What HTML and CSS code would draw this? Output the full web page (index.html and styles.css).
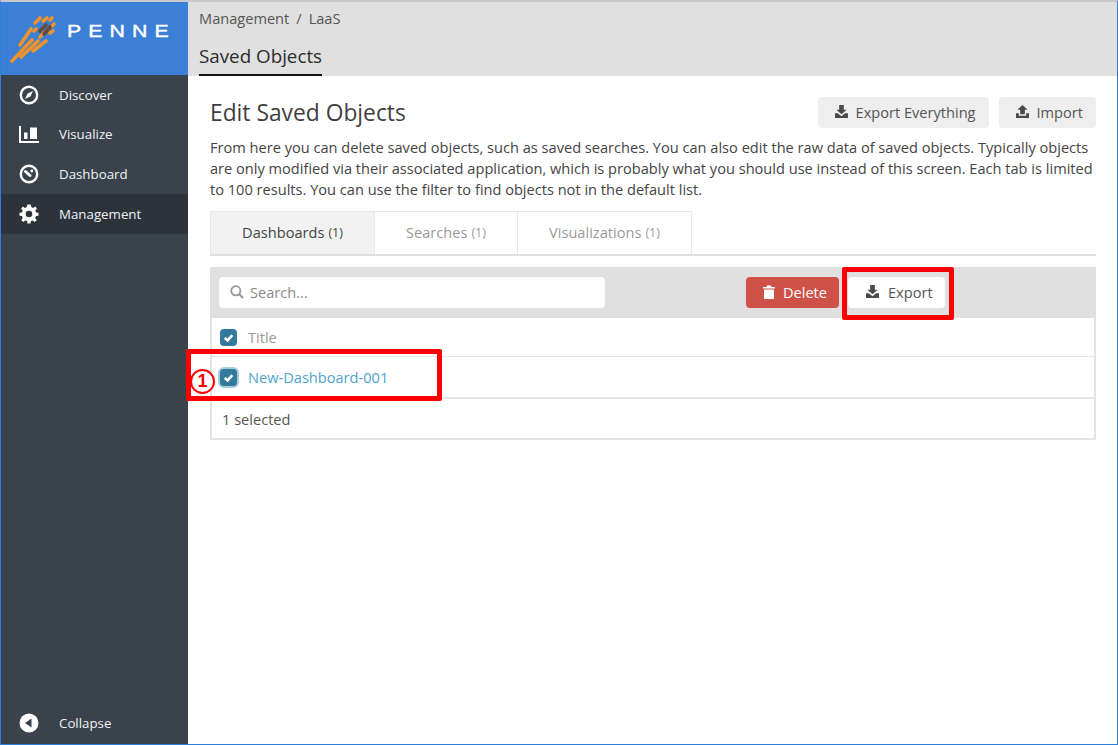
FILE: index.html
```html
<!DOCTYPE html>
<html lang="en">
<head>
<meta charset="utf-8">
<title>Saved Objects</title>
<link rel="stylesheet" href="styles.css">
</head>
<body>
<div class="frame">
  <aside class="sidebar">
    <div class="logo">
      <svg class="logo-mark" width="52" height="52" viewBox="10 13 52 52">
        <g stroke="#f0932b" stroke-width="3.600" stroke-linecap="round">
          <path d="M12 61 L32 40"/><path d="M21 57 L38 41"/><path d="M33 51 L46 41"/>
          <path d="M20 45 L31 29"/><path d="M35 23 L40 18"/><path d="M43 21 L47 18"/>
          <path d="M50 20 L52 18"/><path d="M34 31 L36 29"/><path d="M52 26 L54 24"/>
          <path d="M50 33 L53 31"/><path d="M40 37 L44 33"/>
        </g>
        <g stroke="#6b4a35" stroke-width="3.600" stroke-linecap="round">
          <path d="M40 31 L46 25"/><path d="M44 34 L50 27"/>
        </g>
      </svg>
      <span class="logo-text">PENNE</span>
    </div>
    <nav class="nav">
      <a class="nav-item">
        <svg class="nav-icon" viewBox="0 0 20 20"><circle cx="10" cy="10" r="8.200" fill="none" stroke="#fff" stroke-width="2.400"/><path d="M14 6 L11.400 11.400 L6 14 L8.600 8.600 Z" fill="#fff"/></svg>
        <span>Discover</span>
      </a>
      <a class="nav-item">
        <svg class="nav-icon" viewBox="0 0 20 20"><path d="M1 2 V18 H20" fill="none" stroke="#fff" stroke-width="2"/><rect x="5" y="8.500" width="3.500" height="6.500" fill="#fff"/><rect x="11" y="3.500" width="7" height="11.500" fill="#fff"/></svg>
        <span>Visualize</span>
      </a>
      <a class="nav-item">
        <svg class="nav-icon" viewBox="0 0 20 20"><circle cx="10" cy="10" r="8.200" fill="none" stroke="#fff" stroke-width="2.400"/><path d="M6.500 7.500 L11 11.500" stroke="#fff" stroke-width="3" stroke-linecap="round"/><circle cx="12.800" cy="7" r="1.400" fill="#fff"/></svg>
        <span>Dashboard</span>
      </a>
      <a class="nav-item active">
        <svg class="nav-icon" viewBox="0 0 20 20"><path fill="#fff" fill-rule="evenodd" d="M8.300 0.500 H11.700 L12.200 3 L14.200 3.900 L16.400 2.500 L18 4.800 L16.300 6.500 L17 8.400 L19.500 8.800 V11.700 L17 12.100 L16.200 14 L17.700 16.200 L15.500 18 L13.800 16.400 L11.900 17.100 L11.500 19.500 H8.500 L8.100 17.100 L6.200 16.400 L4.400 18 L2.300 16.200 L3.700 14 L3 12.100 L0.500 11.700 V8.800 L3 8.400 L3.700 6.500 L2.100 4.800 L3.800 2.500 L5.800 3.900 L7.800 3 Z M10 6.700 A3.300 3.300 0 1 0 10 13.300 A3.300 3.300 0 1 0 10 6.700 Z"/></svg>
        <span>Management</span>
      </a>
    </nav>
    <a class="nav-item collapse">
      <svg class="nav-icon" viewBox="0 0 20 20"><circle cx="10" cy="10" r="9.500" fill="#fff"/><path d="M12.500 5.500 V14.500 L6 10 Z" fill="#3a424c"/></svg>
      <span>Collapse</span>
    </a>
  </aside>
  <main class="main">
    <header class="topbar">
      <div class="crumbs"><span>Management</span><span class="sep">/</span><span>LaaS</span></div>
      <div class="topbar-tab">Saved Objects</div>
    </header>
    <section class="content">
      <div class="title-row">
        <h1>Edit Saved Objects</h1>
        <div class="title-actions">
          <button class="btn btn-grey">
            <svg class="btn-icon" viewBox="0 0 16 14"><path d="M5.500 0 H10.500 V5 H13.500 L8 10 L2.500 5 H5.500 Z" fill="#4a4a4a"/><path d="M1 9 H4 L8 12 L12 9 H15 V14 H1 Z" fill="#4a4a4a"/></svg>
            Export Everything
          </button>
          <button class="btn btn-grey">
            <svg class="btn-icon" viewBox="0 0 16 14"><path d="M8 0 L13.500 5 H10.500 V10 H5.500 V5 H2.500 Z" fill="#4a4a4a"/><path d="M1 9 H4 V11.500 H12 V9 H15 V14 H1 Z" fill="#4a4a4a"/></svg>
            Import
          </button>
        </div>
      </div>
      <p class="intro">From here you can delete saved objects, such as saved searches. You can also edit the raw data of saved objects. Typically objects are only modified via their associated application, which is probably what you should use instead of this screen. Each tab is limited to 100 results. You can use the filter to find objects not in the default list.</p>
      <div class="tabs">
        <div class="tab active">Dashboards <small>(1)</small></div>
        <div class="tab">Searches <small>(1)</small></div>
        <div class="tab">Visualizations <small>(1)</small></div>
      </div>
      <div class="toolbar">
        <div class="search">
          <svg class="search-icon" viewBox="0 0 14 14"><circle cx="5.800" cy="5.800" r="4.600" fill="none" stroke="#9a9a9a" stroke-width="1.800"/><path d="M9.200 9.200 L13 13" stroke="#9a9a9a" stroke-width="2.200"/></svg>
          <span>Search...</span>
        </div>
        <div class="toolbar-actions">
          <button class="btn btn-danger">
            <svg class="trash" viewBox="0 0 12 14"><path d="M4 0.500 H8 L8.500 2 H12 V3.500 H0 V2 H3.500 Z M1 4.500 H11 V14 H1 Z" fill="#fff"/></svg>
            Delete
          </button>
          <button class="btn btn-white">
            <svg class="btn-icon" viewBox="0 0 16 14"><path d="M5.500 0 H10.500 V5 H13.500 L8 10 L2.500 5 H5.500 Z" fill="#4a4a4a"/><path d="M1 9 H4 L8 12 L12 9 H15 V14 H1 Z" fill="#4a4a4a"/></svg>
            Export
          </button>
        </div>
      </div>
      <div class="table">
        <div class="row row-head"><span class="check"><svg viewBox="0 0 18 18"><path d="M5 9.500 L8 12 L13 6.500" fill="none" stroke="#fff" stroke-width="2.800"/></svg></span><span class="th">Title</span></div>
        <div class="row row-body"><span class="check focus"><svg viewBox="0 0 18 18"><path d="M5 9.500 L8 12 L13 6.500" fill="none" stroke="#fff" stroke-width="2.800"/></svg></span><a class="link">New-Dashboard-001</a></div>
        <div class="row row-foot">1 selected</div>
      </div>
    </section>
  </main>
  <div class="mark mark-export"></div>
  <div class="mark mark-row"></div>
  <div class="step">1</div>
</div>
</body>
</html>
```

FILE: styles.css
```css
* { box-sizing: border-box; }
html, body { margin: 0; height: 100%; }
body { font-family: "Open Sans", sans-serif; color: #444; background: #fff; overflow: hidden; }
.frame {
  position: relative;
  width: 1118px;
  height: 745px;
  display: flex;
  border-top: 2px solid #c8c8cc;
  border-left: 1px solid #2f80d8;
  border-right: 1px solid #2f80d8;
  border-bottom: 1px solid #2f80d8;
}
.sidebar {
  width: 187px;
  flex: none;
  background: #3a424c;
  display: flex;
  flex-direction: column;
  color: #eef2f5;
}
.logo {
  height: 73px;
  background: #3b80d6;
  display: flex;
  align-items: flex-start;
  padding: 11px 0 0 9px;
  gap: 5px;
  flex: none;
}
.logo-mark { flex: none; }
.logo-text {
  color: #fff;
  font-family: "Liberation Sans", sans-serif;
  font-size: 17px;
  line-height: 20px;
  letter-spacing: 5.700px;
  margin-top: 9px;
  -webkit-text-stroke: 0.4px #fff;
  transform: scaleX(1.25);
  transform-origin: left center;
}
.nav { flex: 1; }
.nav-item {
  height: 39.670px;
  display: flex;
  align-items: center;
  padding-left: 18px;
  font-size: 13.300px;
  gap: 20px;
  color: #eef2f5;
}
.nav-item.active { background: #2d333b; }
.nav-icon { width: 20px; height: 20px; flex: none; }
.collapse { margin-bottom: 1px; }
.main { flex: 1; min-width: 0; display: flex; flex-direction: column; }
.topbar { height: 74px; background: #e0e0e0; padding: 0 11px; flex: none; }
.crumbs { font-size: 14.600px; line-height: 19px; padding-top: 7px; color: #555; display: flex; gap: 7px; height: 30px; }
.topbar-tab {
  display: inline-block;
  font-size: 18.800px;
  line-height: 25px;
  height: 44px;
  padding-top: 12px;
  color: #2c2c2c;
  border-bottom: 2px solid #111;
}
.content { padding: 0 21px 0 22px; flex: 1; }
.title-row { display: flex; justify-content: space-between; align-items: center; padding-top: 21px; padding-bottom: 9px; }
h1 { margin: 0; font-size: 22.800px; font-weight: 400; line-height: 30px; color: #3f3f3f; }
.title-actions { display: flex; gap: 10px; }
.btn {
  border: 0;
  font-family: inherit;
  font-size: 14.600px;
  border-radius: 4px;
  height: 31px;
  padding: 0 12px 2px;
  display: inline-flex;
  align-items: center;
  gap: 7px;
  color: #555;
}
.btn-grey { background: #eee; padding: 0 13px 2px 16px; }
.btn-icon { width: 15px; height: 13px; }
.intro { margin: 0; font-size: 14.600px; line-height: 21px; color: #444; width: 886px; }
.tabs { display: flex; margin-top: 11px; height: 45px; border-bottom: 2px solid #e0e0e0; }
.tab {
  height: 43px;
  border: 1px solid #e8e8e8;
  border-left: 0;
  border-bottom: 0;
  padding-bottom: 2px;
  display: flex;
  align-items: center;
  justify-content: center;
  gap: 4px;
  font-size: 14.600px;
  color: #9a9a9a;
  background: #fff;
  white-space: nowrap;
}
.tab:nth-child(1) { width: 165px; background: #f2f2f2; color: #444; border-left: 1px solid #e8e8e8; }
.tab:nth-child(2) { width: 143px; }
.tab:nth-child(3) { width: 174px; }
.tab small { font-size: 12.500px; }
.toolbar {
  margin-top: 11px;
  height: 51px;
  background: #e0e0e0;
  display: flex;
  align-items: center;
  padding-left: 9px;
}
.search {
  width: 386px;
  height: 31px;
  background: #fff;
  border-radius: 4px;
  display: flex;
  align-items: center;
  padding: 0 0 2px 11px;
  gap: 6px;
  font-size: 14.600px;
  color: #8a8a8a;
}
.search-icon { width: 14px; height: 14px; }
.toolbar-actions { display: flex; gap: 9px; margin-left: 141px; }
.btn-danger { background: #cf5249; color: #fff; width: 93px; padding-left: 17px; gap: 8px; }
.trash { width: 12px; height: 14px; }
.btn-white { background: #fff; width: 97px; padding-left: 17px; gap: 8px; }
.table { border: 2px solid #e4e4e4; border-top: 0; }
.row { display: flex; align-items: center; font-size: 14.600px; padding-left: 8px; gap: 11px; }
.row-head { height: 39px; border-bottom: 1px solid #e4e4e4; }
.row-body { height: 42px; border-bottom: 2px solid #e4e4e4; }
.row-foot { height: 39px; padding-left: 10px; color: #555; }
.th { color: #9a9a9a; }
.link { color: #4fa3cc; }
.check {
  width: 17px;
  height: 17px;
  border-radius: 4px;
  background: #32799c;
  display: block;
  flex: none;
}
.check svg { display: block; width: 17px; height: 17px; }
.check.focus { box-shadow: 0 0 0 2px #a6cddd; }
.mark { position: absolute; border: 5px solid #fe0000; border-radius: 2px; }
.mark-export { left: 841px; top: 265px; width: 112px; height: 53px; }
.mark-row { left: 185px; top: 347px; width: 256px; height: 52px; }
.step {
  position: absolute;
  left: 189px;
  top: 367px;
  width: 25px;
  height: 25px;
  border: 2px solid #fe0000;
  border-radius: 50%;
  background: #fff;
  color: #fe0000;
  font-family: "Liberation Sans", sans-serif;
  font-weight: 700;
  font-size: 18px;
  line-height: 21px;
  text-align: center;
}
```
